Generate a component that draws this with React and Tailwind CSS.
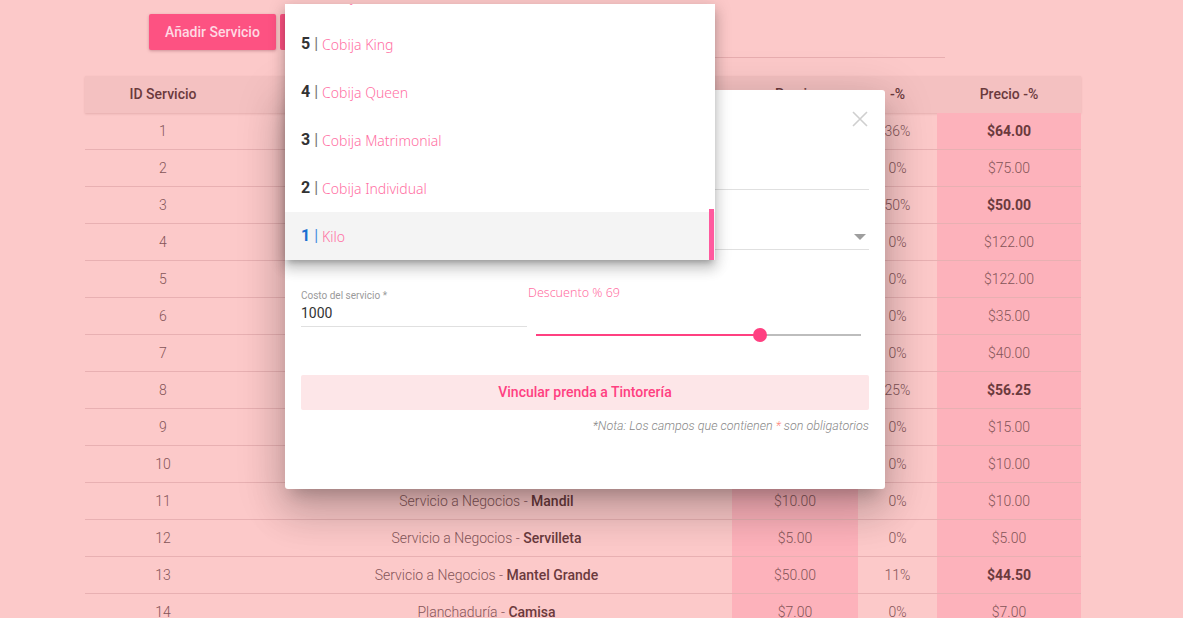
import React from 'react';

const rows = [
  { id: 1, cat: 'Tintorería', name: 'Edredón King', price: '$100.00', pct: '36%', final: '$64.00', hot: true },
  { id: 2, cat: 'Tintorería', name: 'Edredón Queen', price: '$75.00', pct: '0%', final: '$75.00' },
  { id: 3, cat: 'Tintorería', name: 'Edredón Matrimonial', price: '$100.00', pct: '50%', final: '$50.00', hot: true },
  { id: 4, cat: 'Tintorería', name: 'Traje', price: '$122.00', pct: '0%', final: '$122.00' },
  { id: 5, cat: 'Tintorería', name: 'Vestido', price: '$122.00', pct: '0%', final: '$122.00' },
  { id: 6, cat: 'Tintorería', name: 'Saco', price: '$35.00', pct: '0%', final: '$35.00' },
  { id: 7, cat: 'Tintorería', name: 'Abrigo', price: '$40.00', pct: '0%', final: '$40.00' },
  { id: 8, cat: 'Lavandería', name: 'Kilo', price: '$75.00', pct: '25%', final: '$56.25', hot: true },
  { id: 9, cat: 'Servicio a Negocios', name: 'Toalla', price: '$15.00', pct: '0%', final: '$15.00' },
  { id: 10, cat: 'Servicio a Negocios', name: 'Filipina', price: '$10.00', pct: '0%', final: '$10.00' },
  { id: 11, cat: 'Servicio a Negocios', name: 'Mandil', price: '$10.00', pct: '0%', final: '$10.00' },
  { id: 12, cat: 'Servicio a Negocios', name: 'Servilleta', price: '$5.00', pct: '0%', final: '$5.00' },
  { id: 13, cat: 'Servicio a Negocios', name: 'Mantel Grande', price: '$50.00', pct: '11%', final: '$44.50', hot: true },
  { id: 14, cat: 'Planchaduría', name: 'Camisa', price: '$7.00', pct: '0%', final: '$7.00' },
];

const options = [
  { id: 6, name: 'Cobija Grande' },
  { id: 5, name: 'Cobija King' },
  { id: 4, name: 'Cobija Queen' },
  { id: 3, name: 'Cobija Matrimonial' },
  { id: 2, name: 'Cobija Individual' },
  { id: 1, name: 'Kilo', active: true },
];

const roboto = { fontFamily: 'Roboto, "Liberation Sans", sans-serif' };
const noto = { fontFamily: '"Noto Sans", sans-serif' };

const Table = () => (
  <div className="ml-[85px] mt-[18px] w-[996px]">
    {/* encabezado */}
    <div className="grid grid-cols-[156px_491px_126px_79px_144px] h-[37px] bg-[#f4c1c1] shadow-[0_1px_2px_rgba(160,90,90,0.25)] text-[14px] font-medium text-[#6b3a3d]">
      <div className="flex items-center justify-center">ID Servicio</div>
      <div className="flex items-center justify-center">Servicio</div>
      <div className="flex items-center justify-center">Precio</div>
      <div className="flex items-center justify-center">-%</div>
      <div className="flex items-center justify-center">Precio -%</div>
    </div>
    {rows.map((r) => (
      <div
        key={r.id}
        className="grid grid-cols-[156px_491px_126px_79px_144px] h-[37px] border-b border-[#e8b0b2] text-[14px] font-light text-[#855558]"
      >
        <div className="flex items-center justify-center">{r.id}</div>
        <div className="flex items-center justify-center">
          {r.cat}&nbsp;-&nbsp;<span className="font-medium text-[#6b3a3d]">{r.name}</span>
        </div>
        <div className="flex items-center justify-center bg-[#fdb2bb]">{r.price}</div>
        <div className="flex items-center justify-center">{r.pct}</div>
        <div className={`flex items-center justify-center bg-[#fdb2bb] ${r.hot ? 'font-bold text-[#6b3a3d]' : ''}`}>
          {r.final}
        </div>
      </div>
    ))}
  </div>
);

const Dropdown = () => (
  <div className="absolute left-[285px] top-[4px] w-[430px] h-[256px] bg-white overflow-hidden shadow-[0_5px_6px_-3px_rgba(0,0,0,0.25),0_9px_12px_1px_rgba(0,0,0,0.14),0_3px_16px_2px_rgba(0,0,0,0.12)]">
    <div className="-mt-[32px]">
      {options.map((o) => (
        <div
          key={o.id}
          className={`h-[48px] flex items-center pl-4 ${o.active ? 'bg-[#f4f4f4]' : ''}`}
        >
          <span
            className={`text-[16px] font-bold ${o.active ? 'text-[#1a6fd1]' : 'text-[#333]'}`}
            style={roboto}
          >
            {o.id}
          </span>
          <span className={`ml-[4px] text-[16px] ${o.active ? 'text-[#4a8fe0]' : 'text-[#777]'}`} style={roboto}>
            |
          </span>
          <span className="ml-[4px] text-[14px] font-light text-[#ff6fa3]" style={noto}>
            {o.name}
          </span>
        </div>
      ))}
    </div>
    {/* barra de scroll */}
    <div className="absolute right-[1px] top-[205px] w-[5px] h-[51px] bg-[#ff5a9e]" />
  </div>
);

const Modal = () => (
  <div className="absolute left-[285px] top-[90px] w-[600px] h-[399px] bg-white rounded-[3px] px-4 shadow-[0_11px_15px_-7px_rgba(0,0,0,0.2),0_24px_38px_3px_rgba(0,0,0,0.14),0_9px_46px_8px_rgba(0,0,0,0.12)]">
    <div className="h-[100px] border-b border-[#e0e0e0] flex justify-end">
      <svg width="16" height="16" viewBox="0 0 16 16" className="mt-[21px] mr-[1px]">
        <path d="M1 1L15 15M15 1L1 15" stroke="#cfcfcf" strokeWidth="1.6" />
      </svg>
    </div>
    <div className="h-[60px] border-b border-[#e0e0e0] flex justify-end items-end pb-[9px]">
      <svg width="12" height="6" viewBox="0 0 12 6" className="mr-[3px]">
        <path d="M0 0H12L6 6Z" fill="#9e9e9e" />
      </svg>
    </div>
    <div className="mt-[36px] flex items-start">
      <div className="w-[226px] border-b border-[#e0e0e0] pt-[4px] pb-[2px]">
        <div className="text-[10px] leading-[12px] text-[#9a9a9a]">Costo del servicio *</div>
        <div className="text-[14px] leading-[22px] text-[#333]">1000</div>
      </div>
      <div className="flex-1 pl-[1px]">
        <div className="text-[12.5px] leading-[14px] font-light text-[#ff6fa3]" style={noto}>
          Descuento % 69
        </div>
        <div className="relative mx-[8px] mt-[34px] h-[2px] bg-[#bdbdbd]">
          <div className="absolute left-0 top-0 h-[2px] bg-[#ff4081]" style={{ width: '69%' }} />
          <div className="absolute top-[-6px] w-[14px] h-[14px] -ml-[7px] rounded-full bg-[#ff4081]" style={{ left: '69%' }} />
        </div>
      </div>
    </div>
    <div className="mt-[39px] h-[35px] rounded-[2px] bg-[#fde6e8] flex items-center justify-center text-[14px] font-medium text-[#ff4081]">
      Vincular prenda a Tintorería
    </div>
    <div className="mt-[7px] text-right text-[12.5px] italic font-light text-[#888]">
      *Nota: Los campos que contienen <span className="text-[#ff8a80]">*</span> son obligatorios
    </div>
  </div>
);

export default function App() {
  return (
    <div className="relative w-[1183px] h-[618px] overflow-hidden bg-[#fcc9c9]" style={roboto}>
      <div className="pt-[14px] pl-[149px] flex w-[945px]">
        <button className="h-[36px] w-[127px] rounded-[2px] bg-[#fd5282] text-[14px] font-medium text-[#ffd9e3] shadow-[0_1px_3px_rgba(120,40,60,0.35)]">
          Añadir Servicio
        </button>
        <button className="ml-[4px] h-[36px] w-[130px] rounded-[2px] bg-[#fd5282] text-[14px] font-medium text-[#ffd9e3]">
          Añadir Prenda
        </button>
        <div className="flex-1 ml-[40px] h-[44px] border-b border-[#e8aeb0]" />
      </div>
      <Table />
      <Modal />
      <Dropdown />
    </div>
  );
}
